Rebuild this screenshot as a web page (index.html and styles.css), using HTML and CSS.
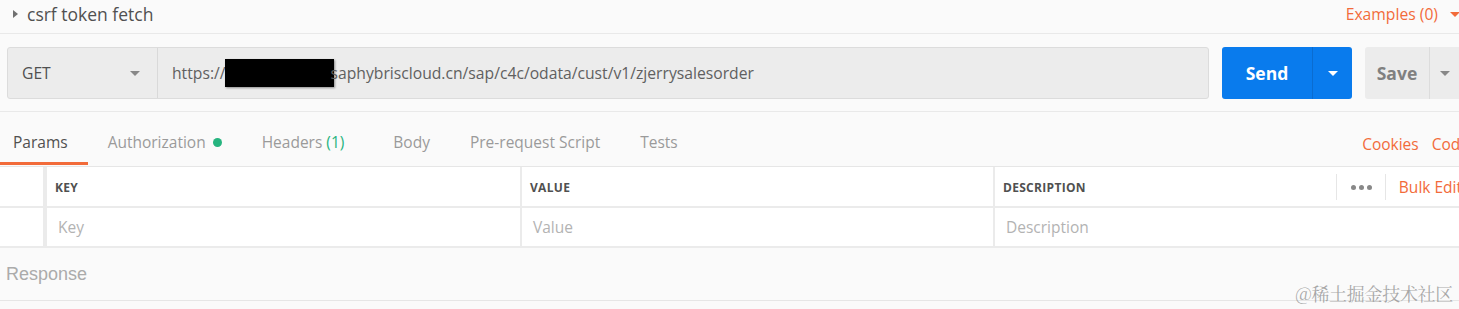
FILE: index.html
```html
<!DOCTYPE html>
<html lang="en">
<head>
  <meta charset="UTF-8">
  <meta name="viewport" content="width=device-width, initial-scale=1.0">
  <title>csrf token fetch</title>
  <link rel="stylesheet" href="styles.css">
</head>
<body>
  <div class="title-row">
    <span class="caret-right"></span>
    <span class="req-name">csrf token fetch</span>
    <span class="examples">Examples (0)</span>
    <span class="caret-down orange"></span>
  </div>

  <div class="request-row">
    <div class="url-group">
      <div class="method">
        <span>GET</span>
        <span class="caret-down gray"></span>
      </div>
      <div class="url">https://<span class="redact"></span>saphybriscloud.cn/sap/c4c/odata/cust/v1/zjerrysalesorder</div>
    </div>
    <div class="send">
      <span class="send-label">Send</span>
      <span class="send-drop"><span class="caret-down white"></span></span>
    </div>
    <div class="save">
      <span class="save-label">Save</span>
      <span class="save-drop"><span class="caret-down gray"></span></span>
    </div>
  </div>

  <div class="tabs">
    <div class="tab active">Params</div>
    <div class="tab">Authorization <span class="dot"></span></div>
    <div class="tab">Headers <span class="count">(1)</span></div>
    <div class="tab">Body</div>
    <div class="tab">Pre-request Script</div>
    <div class="tab">Tests</div>
    <div class="tab-links">
      <span>Cookies</span>
      <span>Code</span>
    </div>
  </div>

  <div class="params-table">
    <div class="row head">
      <div class="cell check"></div>
      <div class="cell key">KEY</div>
      <div class="cell value">VALUE</div>
      <div class="cell desc">
        <span>DESCRIPTION</span>
        <div class="desc-tools">
          <span class="dots"><i></i><i></i><i></i></span>
          <span class="bulk">Bulk Edit</span>
        </div>
      </div>
    </div>
    <div class="row">
      <div class="cell check"></div>
      <div class="cell key placeholder">Key</div>
      <div class="cell value placeholder">Value</div>
      <div class="cell desc placeholder">Description</div>
    </div>
  </div>

  <div class="response">Response</div>

  <div class="watermark">@稀土掘金技术社区</div>
</body>
</html>
```

FILE: styles.css
```css
* {
  box-sizing: border-box;
}

body {
  margin: 0;
  font-family: 'Open Sans', sans-serif;
  background: #fafafa;
  color: #505050;
  overflow: hidden;
  position: relative;
  height: 309px;
}

/* title row */
.title-row {
  height: 34px;
  display: flex;
  align-items: center;
  padding-left: 13px;
  border-bottom: 1px solid #e9e9e9;
  padding-bottom: 5px;
}

.caret-right {
  width: 0;
  height: 0;
  border-top: 4px solid transparent;
  border-bottom: 4px solid transparent;
  border-left: 5px solid #707070;
  margin-right: 9px;
}

.req-name {
  font-size: 17.5px;
  color: #505050;
}

.examples {
  margin-left: auto;
  font-size: 15.7px;
  color: #f26b3a;
  margin-right: 12px;
}

.caret-down {
  display: inline-block;
  width: 0;
  height: 0;
  border-left: 5px solid transparent;
  border-right: 5px solid transparent;
  border-top: 5px solid #888;
}

.caret-down.orange {
  border-top-color: #f26b3a;
  margin-right: -1px;
}

.caret-down.white {
  border-top-color: #fff;
}

.caret-down.gray {
  border-top-color: #888;
}

/* request row */
.request-row {
  display: flex;
  padding: 13px 0 12px 7px;
  height: 77px;
}

.request-row > div {
  flex-shrink: 0;
}

.url-group {
  width: 1202px;
  display: flex;
  background: #ececec;
  border: 1px solid #dcdcdc;
  border-radius: 3px;
}

.method {
  width: 150px;
  border-right: 1px solid #d9d9d9;
  display: flex;
  align-items: center;
  justify-content: space-between;
  padding: 0 17px 0 14px;
  font-size: 15.7px;
  color: #505050;
}

.url {
  display: flex;
  align-items: center;
  padding-left: 14px;
  font-size: 15.7px;
  color: #606060;
}

.redact {
  display: inline-block;
  width: 109px;
  height: 28px;
  background: #000;
  margin-left: -1px;
  margin-right: -3px;
  box-shadow: 1px 1px 2px rgba(0,0,0,0.4);
}

.send {
  margin-left: 13px;
  width: 130px;
  display: flex;
  background: #097bed;
  border-radius: 3px;
  color: #fff;
}

.send-label {
  width: 91px;
  display: flex;
  align-items: center;
  justify-content: center;
  font-size: 17.5px;
  font-weight: 700;
  border-right: 1px solid #0a6cd0;
}

.send-drop,
.save-drop {
  flex: 1;
  display: flex;
  align-items: center;
  justify-content: center;
}

.save {
  margin-left: 13px;
  width: 110px;
  display: flex;
  background: #ececec;
  border-radius: 3px;
  color: #808080;
}

.save-label {
  width: 65px;
  display: flex;
  align-items: center;
  justify-content: center;
  font-size: 17.5px;
  font-weight: 700;
  border-right: 1px solid #dcdcdc;
}

.save-drop {
  flex: none;
  width: 30px;
}

/* tabs */
.tabs {
  display: flex;
  height: 56px;
  border-top: 1px solid #e9e9e9;
  border-bottom: 1px solid #e6e6e6;
  padding-bottom: 1px;
}

.tab {
  display: flex;
  align-items: center;
  padding: 10px 20px 0;
  font-size: 15.5px;
  color: #9a9a9a;
  border-bottom: 3px solid transparent;
  white-space: nowrap;
}

.tab:nth-child(4) {
  padding-left: 29px;
}

.tab.active {
  padding-left: 13px;
  color: #505050;
  border-bottom-color: #f26b3a;
}

.dot {
  display: inline-block;
  width: 9px;
  height: 9px;
  border-radius: 50%;
  background: #26b47f;
  margin-left: 7px;
}

.count {
  color: #26b47f;
  margin-left: 4px;
}

.tab-links {
  margin-left: auto;
  display: flex;
  align-items: center;
  gap: 13px;
  padding-top: 10px;
  font-size: 15.5px;
  color: #f26b3a;
  margin-right: -10px;
}

/* table */
.params-table {
  background: #fff;
}

.row {
  display: flex;
  height: 40px;
  border-bottom: 2px solid #ebebeb;
}

.head {
  height: 41px;
}

.cell {
  display: flex;
  align-items: center;
  font-size: 15.5px;
}

.check {
  width: 47px;
  border-right: 4px solid #ebebeb;
}

.key {
  width: 475px;
  border-right: 2px solid #ebebeb;
}

.value {
  width: 473px;
  border-right: 2px solid #ebebeb;
}

.desc {
  flex: 1;
}

.head .cell {
  padding-left: 8px;
  padding-top: 1px;
  font-size: 12px;
  font-weight: 700;
  color: #505050;
  letter-spacing: 0.3px;
}

.head .check {
  padding-left: 0;
}

.placeholder {
  padding-left: 11px;
  color: #b3b3b3;
}

.desc-tools {
  margin-left: auto;
  display: flex;
  align-items: center;
  height: 26px;
}

.dots {
  display: flex;
  gap: 3px;
  height: 26px;
  align-items: center;
  padding: 0 13px 0 14px;
  border-left: 1px solid #e6e6e6;
  border-right: 1px solid #e6e6e6;
}

.dots i {
  width: 5px;
  height: 5px;
  border-radius: 50%;
  background: #888;
}

.bulk {
  padding-left: 13px;
  font-size: 15.5px;
  font-weight: 400;
  color: #f26b3a;
  letter-spacing: 0;
  white-space: nowrap;
  margin-right: -3px;
}

/* response */
.response {
  height: 53px;
  display: flex;
  align-items: center;
  padding-left: 6px;
  border-bottom: 1px solid #e6e6e6;
  font-family: 'Liberation Sans', sans-serif;
  font-size: 18px;
  color: #ababab;
}

.watermark {
  position: absolute;
  right: 6px;
  top: 280px;
  font-family: 'Noto Serif CJK SC', 'Noto Sans CJK SC', serif;
  font-size: 18px;
  color: rgba(140,140,140,0.75);
  letter-spacing: -0.3px;
}
```
